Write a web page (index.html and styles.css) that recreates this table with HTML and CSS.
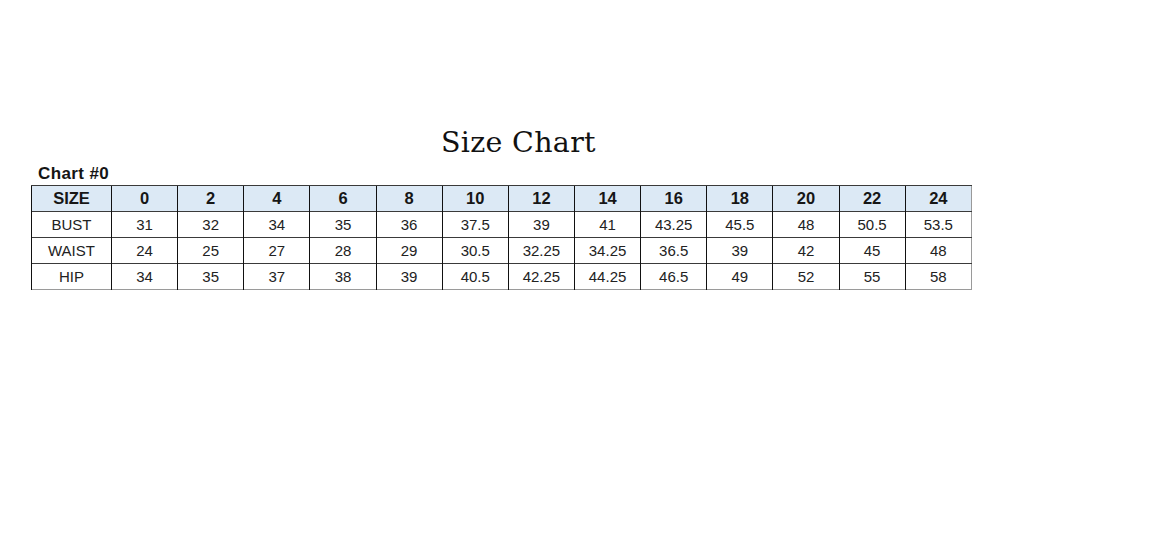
FILE: index.html
```html
<!DOCTYPE html>
<html>
<head>
<meta charset="utf-8">
<link rel="stylesheet" href="styles.css">
</head>
<body>
<main class="page">
  <h1 class="title">Size Chart</h1>
  <div class="chart-label">Chart #0</div>
  <table class="chart">
    <colgroup>
      <col class="c-first">
      <col span="13" class="c-size">
    </colgroup>
    <thead>
      <tr><th>SIZE</th><th>0</th><th>2</th><th>4</th><th>6</th><th>8</th><th>10</th><th>12</th><th>14</th><th>16</th><th>18</th><th>20</th><th>22</th><th>24</th></tr>
    </thead>
    <tbody>
      <tr><td>BUST</td><td>31</td><td>32</td><td>34</td><td>35</td><td>36</td><td>37.5</td><td>39</td><td>41</td><td>43.25</td><td>45.5</td><td>48</td><td>50.5</td><td>53.5</td></tr>
      <tr><td>WAIST</td><td>24</td><td>25</td><td>27</td><td>28</td><td>29</td><td>30.5</td><td>32.25</td><td>34.25</td><td>36.5</td><td>39</td><td>42</td><td>45</td><td>48</td></tr>
      <tr><td>HIP</td><td>34</td><td>35</td><td>37</td><td>38</td><td>39</td><td>40.5</td><td>42.25</td><td>44.25</td><td>46.5</td><td>49</td><td>52</td><td>55</td><td>58</td></tr>
    </tbody>
  </table>
</main>
</body>
</html>
```
FILE: styles.css
```css
html, body {
  margin: 0;
  padding: 0;
  background: #ffffff;
}
.page {
  width: 1160px;
  height: 556px;
  padding: 127px 0 0 31px;
  box-sizing: border-box;
  font-family: "Liberation Sans", Arial, sans-serif;
  color: #1a1a1a;
}
.title {
  margin: 0;
  padding-left: 410px;
  font-family: "DejaVu Serif", "Liberation Serif", serif;
  font-weight: normal;
  font-size: 28.5px;
  line-height: 32px;
  letter-spacing: 0.3px;
  color: #111;
}
.chart-label {
  margin-top: 5px;
  padding-left: 7px;
  font-weight: bold;
  font-size: 17px;
  line-height: 20px;
  letter-spacing: 0.4px;
  color: #151515;
}
.chart {
  margin-top: 1px;
  width: 941px;
  table-layout: fixed;
  border-collapse: collapse;
  border-top: 1px solid #9a9a9a;
  border-bottom: 1px solid #9a9a9a;
  border-right: 1px solid #9a9a9a;
  border-left: 1px solid #111;
}
.c-first { width: 80px; }
.chart th, .chart td {
  padding: 0;
  text-align: center;
  border-left: 1px solid #111;
  border-top: 1px solid #3a3a3a;
}
.chart th {
  height: 25px;
  background: #dce9f5;
  font-weight: bold;
  font-size: 16.5px;
  color: #161616;
}
.chart td {
  height: 25px;
  font-size: 15px;
  color: #222;
}
```
